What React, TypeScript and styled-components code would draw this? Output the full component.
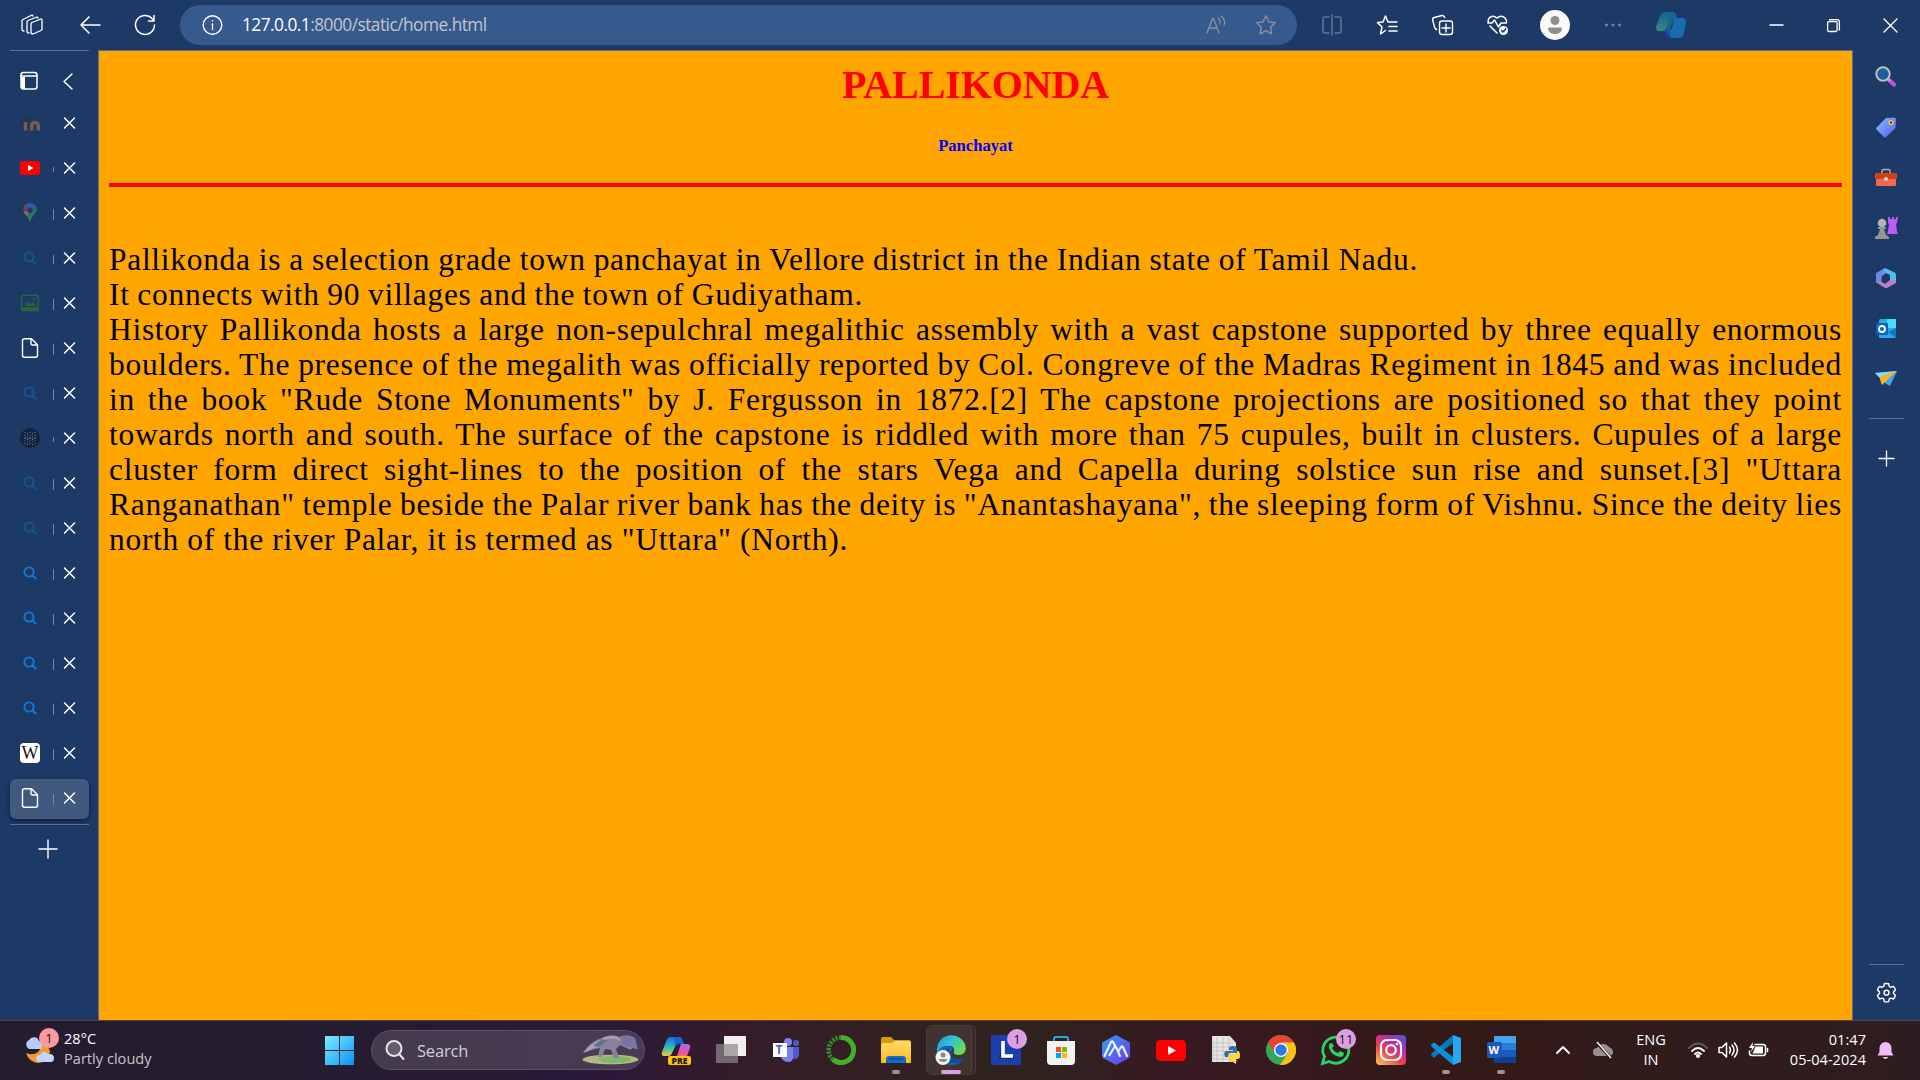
import React from "react";
import styled, { createGlobalStyle } from "styled-components";

const Global = createGlobalStyle`
  * { box-sizing: border-box; }
  html, body { margin: 0; padding: 0; background: #1d3a67; overflow: hidden; }
  svg { display: block; flex: none; overflow: visible; }
`;

const UI = `"Open Sans", "Noto Sans", sans-serif`;

const Screen = styled.div`
  width: 1920px;
  height: 1080px;
  display: grid;
  grid-template-rows: 50px 970px 60px;
  background: #1d3a67;
  color: #fff;
  font-family: ${UI};
  overflow: hidden;
`;
const Toolbar = styled.header`
  display: flex;
  align-items: center;
  height: 50px;
`;
const Slot = styled.div<{ $w: number }>`
  width: ${(p) => p.$w}px;
  flex: none;
  display: flex;
  align-items: center;
  justify-content: center;
`;
const Address = styled.div`
  width: 1117px;
  height: 40px;
  flex: none;
  display: flex;
  align-items: center;
  padding-left: 22px;
  border-radius: 20px;
  background: #365a8e;
`;
const Url = styled.div`
  flex: 1;
  margin-left: 8px;
  font-size: 17.3px;
  line-height: 24px;
  letter-spacing: -0.52px;
  color: #c3c5c9;
  white-space: nowrap;
  b { color: #fff; font-weight: 400; }
`;
const Middle = styled.div`
  display: grid;
  grid-template-columns: 98px 1755px 67px;
  height: 970px;
`;
const TabRail = styled.aside`
  display: flex;
  flex-direction: column;
  padding: 0 9px 0 10px;
`;
const RailLine = styled.div<{ $w?: number }>`
  width: ${(p) => p.$w ?? 79}px;
  height: 1px;
  flex: none;
  background: #5b708f;
`;
const RailHead = styled.div`
  height: 50px;
  margin-bottom: 3px;
  display: flex;
  align-items: center;
  padding: 10px 0 0 9px;
  gap: 25px;
`;
const Tab = styled.div<{ $active?: boolean }>`
  width: 79px;
  height: 40px;
  margin-bottom: 5px;
  flex: none;
  display: flex;
  align-items: center;
  padding: 0 0 2px 10px;
  border-radius: 6px;
  background: ${(p) => (p.$active ? "#41597f" : "transparent")};
  box-shadow: ${(p) => (p.$active ? "0 2px 5px rgba(5,15,40,.7)" : "none")};
`;
const TabTick = styled.div<{ $h: number }>`
  width: 1px;
  height: ${(p) => p.$h}px;
  margin: 3px 10px 0 13px;
  background: #7487a3;
`;
const Wiki = styled.div`
  width: 20px;
  height: 20px;
  border-radius: 4px;
  background: #fff;
  color: #111;
  font: 18px/20px "Liberation Serif", serif;
  display: flex;
  justify-content: center;
`;
const NewTab = styled.div`
  display: flex;
  justify-content: center;
  padding: 15px 3px 0 0;
`;
const Page = styled.main`
  border: 1px solid #566f8f;
  border-bottom: 0;
  background: #ffa500;
  padding: 0 10px;
  font-family: "Liberation Serif", "Times New Roman", serif;
  color: #000;
`;
const Title = styled.h1`
  margin: 0;
  padding-top: 11px;
  font-size: 40px;
  line-height: 46px;
  letter-spacing: -0.1px;
  text-align: center;
  color: red;
`;
const Subtitle = styled.h5`
  margin: 28px 0 0;
  font-size: 16.6px;
  line-height: 19px;
  text-align: center;
  color: blue;
`;
const Rule = styled.hr`
  margin: 28px 0 55px;
  height: 4px;
  border: 0;
  background: red;
`;
const Line = styled.div<{ $w?: number }>`
  width: ${(p) => p.$w ?? 1733}px;
  height: 35px;
  font-size: 31.5px;
  line-height: 35px;
  letter-spacing: 0.7px;
  word-spacing: -2px;
  white-space: nowrap;
  text-align: justify;
  text-align-last: justify;
`;
const SideBar = styled.aside`
  display: flex;
  flex-direction: column;
  align-items: center;
  padding: 2px 1px 0 0;
`;
const SideItem = styled.div<{ $h?: number }>`
  height: ${(p) => p.$h ?? 50.3}px;
  flex: none;
  display: flex;
  align-items: center;
`;
const Spacer = styled.div`
  flex: 1;
`;
const Taskbar = styled.footer`
  height: 60px;
  display: flex;
  align-items: center;
  padding-bottom: 1px;
  border-top: 1px solid #514448;
  background: linear-gradient(90deg, #241d2f 0, #241d30 280px, #2b1938 600px, #351c2a 740px, #30221f 960px, #30221f 1040px, #371a22 1180px, #331918 1460px, #311b1b 1640px, #2e1d20 1920px);
`;
const Weather = styled.div`
  width: 312px;
  display: flex;
  padding-left: 23px;
`;
const WeatherIcon = styled.div`
  position: relative;
  width: 41px;
  height: 42px;
`;
const Badge = styled.div<{ $bg: string; $x: number; $y: number }>`
  position: absolute;
  left: ${(p) => p.$x}px;
  top: ${(p) => p.$y}px;
  width: 20px;
  height: 20px;
  border-radius: 50%;
  background: ${(p) => p.$bg};
  color: #1c1620;
  font-size: 13px;
  line-height: 20px;
  text-align: center;
`;
const Stack = styled.div<{ $align?: string }>`
  font-size: 14.5px;
  line-height: 20px;
  letter-spacing: 0.05px;
  text-align: ${(p) => p.$align ?? "left"};
  white-space: nowrap;
  span { color: #c9c6cb; }
`;
const SearchPill = styled.div`
  width: 274px;
  height: 40px;
  margin: 0 3px 0 5px;
  flex: none;
  display: flex;
  align-items: center;
  padding: 0 5px 0 13px;
  border: 1px solid #5f5068;
  border-radius: 20px;
  background: linear-gradient(90deg, #443b4c, #4a3a55);
`;
const SearchText = styled.div`
  flex: 1;
  margin-left: 12px;
  font-size: 16.5px;
  color: #d3ced6;
  letter-spacing: -0.2px;
`;
const AppButton = styled.div`
  position: relative;
  width: 55px;
  height: 50px;
  flex: none;
  display: flex;
  align-items: center;
  justify-content: center;
`;
const ActivePlate = styled.div`
  position: absolute;
  left: 3px;
  top: 0;
  width: 50px;
  height: 50px;
  border-radius: 6px;
  border: 1px solid #4a3d3a;
  background: #382b29;
  &::after {
    content: "";
    display: block;
    width: 44px;
    height: 48px;
    border-radius: 6px;
    border-right: 1px solid #52443f;
    background: #403331;
  }
`;
const Above = styled.div`
  position: relative;
`;
const Running = styled.div<{ $on?: boolean }>`
  position: absolute;
  left: 50%;
  bottom: 1px;
  width: ${(p) => (p.$on ? 20 : 8)}px;
  height: 4px;
  transform: translateX(-50%);
  border-radius: 2px;
  background: ${(p) => (p.$on ? "#dc9fe2" : "#9d9492")};
`;
const Pre = styled.div`
  position: absolute;
  left: 20px;
  top: 31px;
  width: 23px;
  height: 9px;
  border-radius: 2px;
  background: #ffc20e;
  color: #201a10;
  font-size: 8.5px;
  font-weight: 800;
  line-height: 9px;
  text-align: center;
`;
const TileLetter = styled.div<{ $x: number; $y: number; $s: number; $c?: string }>`
  position: absolute;
  left: ${(p) => p.$x}px;
  top: ${(p) => p.$y}px;
  font-size: ${(p) => p.$s}px;
  line-height: 1;
  font-weight: 700;
  color: ${(p) => p.$c ?? "#fff"};
`;
const Tray = styled.div`
  display: flex;
  align-items: center;
  margin-left: 15px;
`;
const Clock = styled.div`
  width: 89px;
  flex: none;
`;

type G = { w: number; h?: number; vb?: string; c?: string; sw?: number; children: React.ReactNode };
const Glyph = ({ w, h = w, vb, c = "#fff", sw = 1.3, children }: G) => (
  <svg width={w} height={h} viewBox={vb ?? `0 0 ${w} ${h}`} fill="none" stroke={c} strokeWidth={sw} strokeLinecap="round" strokeLinejoin="round">
    {children}
  </svg>
);
const Art = ({ w = 30, h = w, children }: { w?: number; h?: number; children: React.ReactNode }) => (
  <svg width={w} height={h} viewBox={`0 0 ${w} ${h}`}>{children}</svg>
);

const Close = () => <Glyph w={10} sw={1.5}><path d="M.5 0l10 10M10.500 0l-10 10" /></Glyph>;
const Lens = ({ dim }: { dim?: boolean }) => (
  <Glyph w={20} c={dim ? "#155792" : "#127ad5"} sw={1.9}><circle cx="9" cy="9" r="4.6" /><path d="m12.5 12.5 3.2 3.2" /></Glyph>
);
const FileIcon = () => (
  <Glyph w={20} sw={1.4}><path d="M4.5.7h7l6 6v10.6a2 2 0 0 1-2 2h-11a2 2 0 0 1-2-2V2.700a2 2 0 0 1 2-2ZM11 .7v5a1.300 1.300 0 0 0 1.300 1.300h5" /></Glyph>
);
const YouTube = ({ w, h }: { w: number; h: number }) => (
  <svg width={w} height={h} viewBox="0 0 30 21"><rect width="30" height="21" rx="4.500" fill="#f00" /><path d="M12 6v9l8-4.500z" fill="#fff" /></svg>
);
const Moodle = () => (
  <Art w={20}><g fill="none" stroke="#7d5c4e" strokeWidth="3.400"><path d="M5.500 17.500V9M11.700 17.500v-5c0-4 6.600-4 6.600 0v5" /></g><path d="M1 8 8 3.500l4 2.500-3 3-5-.5L1.500 15" fill="#2b3342" opacity=".8" /></Art>
);
const MapPin = () => (
  <Art w={20}><path d="M3 6a7 7 0 0 1 5-5.700l2 4.700-4 4z" fill="#6f4058" /><path d="M6 1.500a7 7 0 0 1 10 2L12 8 8 6z" fill="#2a5eae" /><path d="M16 3.500c2 4-1 7-3 9.500-1.500 2-2 4-3 6.500-1-2.500-1.500-4-3-6l5-5z" fill="#2b7762" /><path d="M3.300 8.500 6 8l4 2-3 3.500C5.500 11.600 4 10.500 3.300 8.500z" fill="#7c713f" /><circle cx="10" cy="7" r="2.600" fill="#1d3a67" /></Art>
);
const Picture = () => (
  <Art w={20}><rect x="1.700" y="2.200" width="16.600" height="15.600" rx="1" fill="none" stroke="#2c613f" strokeWidth="1.500" /><path d="M2 14h16v4H2z" fill="#2c613f" /><path d="m4 13 3.500-4 2.500 2 2.500-2 3.500 4z" fill="#2c613f" /><circle cx="14" cy="6.500" r="1.200" fill="#2c613f" /></Art>
);
const DotGlobe = () => (
  <Art w={20}><circle cx="10" cy="10" r="10" fill="#12233d" />
    {[4.5, 7.2, 10, 12.8, 15.5].map((y, j) => [5, 7.5, 10, 12.5, 15].map((x, i) => <circle key={x} cx={x} cy={y + (i % 2 ? 1 : 0)} r={j === 2 ? 0.9 : 0.65} fill="#5c6f8e" />))}
  </Art>
);

type T = { icon: React.ReactNode; tick?: number };
const tabs: T[] = [
  { icon: <Moodle />, tick: 0 },
  { icon: <YouTube w={20} h={14} />, tick: 5 },
  { icon: <MapPin />, tick: 11 },
  { icon: <Lens dim />, tick: 9 },
  { icon: <Picture />, tick: 11 },
  { icon: <FileIcon />, tick: 11 },
  { icon: <Lens dim />, tick: 11 },
  { icon: <DotGlobe />, tick: 5 },
  { icon: <Lens dim /> }, { icon: <Lens dim /> },
  { icon: <Lens /> }, { icon: <Lens /> }, { icon: <Lens /> }, { icon: <Lens /> },
  { icon: <Wiki>W</Wiki> },
  { icon: <FileIcon /> },
];

const story: { t: string; w?: number }[] = [
  { t: "Pallikonda is a selection grade town panchayat in Vellore district in the Indian state of Tamil Nadu.", w: 1309 },
  { t: "It connects with 90 villages and the town of Gudiyatham.", w: 754 },
  { t: "History Pallikonda hosts a large non-sepulchral megalithic assembly with a vast capstone supported by three equally enormous" },
  { t: "boulders. The presence of the megalith was officially reported by Col. Congreve of the Madras Regiment in 1845 and was included" },
  { t: 'in the book "Rude Stone Monuments" by J. Fergusson in 1872.[2] The capstone projections are positioned so that they point' },
  { t: "towards north and south. The surface of the capstone is riddled with more than 75 cupules, built in clusters. Cupules of a large" },
  { t: 'cluster form direct sight-lines to the position of the stars Vega and Capella during solstice sun rise and sunset.[3] "Uttara' },
  { t: 'Ranganathan" temple beside the Palar river bank has the deity is "Anantashayana", the sleeping form of Vishnu. Since the deity lies' },
  { t: 'north of the river Palar, it is termed as "Uttara" (North).', w: 739 },
];

const HiddenDefs = styled.svg`
  position: absolute;
`;
const Defs = () => (
  <HiddenDefs width="0" height="0">
    <defs>
      <linearGradient id="win" x1="0" y1="0" x2="1" y2="1"><stop stopColor="#7aeeff" /><stop offset="1" stopColor="#0a93f5" /></linearGradient>
      <linearGradient id="copA" x1="0" y1="0" x2="0" y2="1"><stop stopColor="#1a6fe0" /><stop offset=".5" stopColor="#24b8c0" /><stop offset="1" stopColor="#e8d13a" /></linearGradient>
      <linearGradient id="copB" x1="0" y1="0" x2="0" y2="1"><stop stopColor="#a86bf0" /><stop offset=".6" stopColor="#ed4fa0" /><stop offset="1" stopColor="#f58a4a" /></linearGradient>
      <linearGradient id="dimA" x1="0" y1="0" x2="0" y2="1"><stop stopColor="#13609b" /><stop offset="1" stopColor="#3a8a7b" /></linearGradient>
      <linearGradient id="insta" x1=".1" y1="1" x2=".8" y2="0"><stop stopColor="#fdc04f" /><stop offset=".4" stopColor="#f0404f" /><stop offset=".7" stopColor="#c32aa3" /><stop offset="1" stopColor="#5b4fd5" /></linearGradient>
      <linearGradient id="edge" x1="0" y1="0" x2="1" y2=".5"><stop stopColor="#1c90df" /><stop offset=".5" stopColor="#35bfdc" /><stop offset="1" stopColor="#65dd58" /></linearGradient>
      <linearGradient id="fold" x1="0" y1="0" x2="0" y2="1"><stop stopColor="#ffdb6e" /><stop offset="1" stopColor="#fbb91c" /></linearGradient>
      <linearGradient id="tag" x1="0" y1="0" x2="1" y2="1"><stop stopColor="#91b9ff" /><stop offset="1" stopColor="#4a61ee" /></linearGradient>
      <linearGradient id="hex" x1="0" y1="0" x2="1" y2="1"><stop stopColor="#33a2ee" /><stop offset="1" stopColor="#6a38e8" /></linearGradient>
    </defs>
  </HiddenDefs>
);

const side: React.ReactNode[] = [
  <Art w={22}><path d="m14.500 14.500 4.500 4" stroke="#c94cf0" strokeWidth="4.200" strokeLinecap="round" /><path d="m12.500 12.500 2.500 2.500" stroke="#aaa7a5" strokeWidth="3" /><circle cx="8" cy="8" r="6.700" fill="#17629c" stroke="#c1bfbd" strokeWidth="2" /></Art>,
  <Art w={22}><path d="M11 2 19 1.500q2 0 2 2L20.500 12 11 21q-1 1-2 0l-7.500-7.500q-1-1 0-2z" fill="url(#tag)" /><circle cx="16" cy="6.500" r="1.900" fill="#384059" stroke="#ffd21b" strokeWidth="1.300" /></Art>,
  <Art w={24} h={22}><path d="M8 6V4q0-1.500 1.500-1.500h5Q16 2.500 16 4v2" fill="none" stroke="#a5afb9" strokeWidth="1.500" /><rect x="2" y="9" width="20" height="10" rx="1.500" fill="#f0694b" /><rect x="1" y="6" width="22" height="6" rx="1" fill="#d04015" /><circle cx="12" cy="12" r="2" fill="#d7dce0" /></Art>,
  <Art w={24}><path d="M14 1h2v2h2V1h2v2h2V1h2l-1 6-1 1 1 8 1 2H13l1-3 1-7-1-1z" fill="#bd5cf5" /><circle cx="8" cy="7" r="4.300" fill="#b5b3b1" /><path d="M4 11h8v2h-2l2 6 3 2v2H1v-2l3-2 2-6H4z" fill="#989694" /></Art>,
  <Art w={22}><path d="M10 1 2 5.500Q1 6 1 7.500v8L6 18l1-9 7-5z" fill="#7188e2" /><path d="m10 1 9.500 4.500Q21 6 21 8v6l-6-1V8L9 5z" fill="#51bdf1" /><path d="m1 15 9 6q1 .7 2 0l9-5v-3l-6 0-5 4-3-2z" fill="#bd7dcf" /></Art>,
  <Art w={22} h={20}><rect x="4" width="17" height="19" rx="1.500" fill="#27a8e9" /><path d="M12 0h9v9h-9z" fill="#50d9ff" /><path d="m13 13 8-4v10z" fill="#1277be" /><rect x="1" y="4" width="12" height="12" rx="1" fill="#0b62bb" /><circle cx="7" cy="10" r="3" fill="none" stroke="#fff" strokeWidth="1.800" /></Art>,
  <Art w={22} h={18}><path d="m0 3 22-2-7 15-5-3z" fill="#3aa6f7" /><path d="m4 6 17-5-13 9-1 5z" fill="#ffc126" /><path d="M0 3 22 1 4 7z" fill="#8bd6ff" /><path d="m7 15-2-8 17-6z" fill="#f5b31d" /></Art>,
];

const Anteater = () => (
  <Art w={57} h={30}>
    <ellipse cx="28.500" cy="24.500" rx="28" ry="4.800" fill="#b0ba80" /><ellipse cx="33" cy="24.500" rx="16" ry="3.500" fill="#84b868" />
    <path d="M1 18Q8 7 17 4q10-5 20-2 9-4 16 1l2 11-5-1-1 2-7-3-4-2-4 4 3 9h-5l-3-8-6-1-3 8h-4l2-9-5 1Q10 15 1 18z" fill="#8980a0" />
    <path d="M1 18Q9 8 18 5l5 2-6 5Q10 13 1 18z" fill="#a9a1b5" /><path d="m11 11 9-7 6 1-9 7z" fill="#5d7287" /><path d="M19 4q7-5 16-3l5 5q-10-4-17-1z" fill="#aa9ba6" /><path d="M38 3q8-4 15 0l3 11-7-2-8-2z" fill="#7774a0" />
  </Art>
);

const Word = () => (
  <Above><Art><path d="M8 1h22v7H8z" fill="#41a5ee" /><path d="M8 8h22v7H8z" fill="#2b7cd3" /><path d="M8 15h22v7H8z" fill="#185abd" /><path d="M8 22h22v6H8z" fill="#103f91" /><rect x="1" y="7" width="15" height="16" rx="1.500" fill="#1d57bb" /></Art><TileLetter $x={3} $y={9} $s={11}>W</TileLetter></Above>
);

const apps: React.ReactNode[] = [
  <AppButton key="copilot"><Art><path d="M6 4q1-2 4-2h9l-4 8-4 8q-1 3-4 3H3q-3 0-2-4z" fill="url(#copA)" /><path d="M13 2h6q2 0 3 4l1 3h-5q-2 0-3 2l-1 1z" fill="#1663cf" /><path d="M20 9h6q4 0 3 4l-3 8q-1 3-4 3h-8q2-2 3-6z" fill="url(#copB)" /></Art><Pre>PRE</Pre></AppButton>,
  <AppButton key="task"><Art><rect x="8" y="1" width="22" height="20" fill="#f1f0f1" /><rect y="9" width="22" height="19" fill="#777475" opacity=".9" /><path d="M8 9h14v12H8z" fill="#a9a7a8" /></Art></AppButton>,
  <AppButton key="teams"><Above><Art w={28}><circle cx="16" cy="6" r="4" fill="#7b83eb" /><circle cx="24" cy="7" r="3" fill="#5059c9" /><path d="M18 11h9v7q0 5-5 5h-4z" fill="#5059c9" /><path d="M9 11h12v10q0 5-5 5t-7-5z" fill="#7b83eb" /><path d="M1 7h14v14H1z" fill="#fff" /></Art><TileLetter $x={4} $y={8} $s={12} $c="#5059c9">T</TileLetter></Above></AppButton>,
  <AppButton key="conda"><Art><path d="M15 2.500a12.500 12.500 0 1 1-8 22" fill="none" stroke="#43b02a" strokeWidth="5" /><path d="M7 24.500A12.500 12.500 0 0 1 15 2.500" fill="none" stroke="#348e28" strokeWidth="4.500" strokeDasharray="2.300 1.200" /></Art></AppButton>,
  <AppButton key="folder"><Art><path d="M0 4q0-2 2-2h8l3 3h15q2 0 2 2v4H0z" fill="#dc9a08" /><path d="M0 10q0-2 2-2h9l3-2h14q2 0 2 2v20H0z" fill="url(#fold)" /><path d="M5 28v-4q0-3 3-3h14q3 0 3 3v4z" fill="#0c6fc4" /><path d="M8 24h14" stroke="#064a91" strokeWidth="1.500" /></Art><Running /></AppButton>,
  <AppButton key="edge"><ActivePlate /><Above><Art><path d="M1 13A14.500 14.500 0 0 1 29.800 13q0 7-7 7-6 0-5-4 1-4-3-5Q6 9 1 18z" fill="url(#edge)" /><path d="M1 18q4-8 12-7 4 1 3 4-4 7 4 9 4 1 8-1-5 8-14 7Q1 29 1 18z" fill="#0d65b9" /><path d="M12 12q-6 8 3 15 6 3 12-3-12 3-12-6z" fill="#0a4c9e" /><circle cx="7" cy="22.500" r="7.500" fill="#f5f3f2" /><circle cx="7" cy="20" r="2.500" fill="#8b8988" /><path d="M3 24h8q0 3-4 3t-4-3z" fill="#8b8988" /></Art></Above><Running $on /></AppButton>,
  <AppButton key="l"><Art><path d="M0 0h30v30H0z" fill="#1c3fae" /><path d="m8 24 3-18v15h12v3z" fill="#133158" /><path d="M12 6v15h10" fill="none" stroke="#fff" strokeWidth="3.600" /></Art><Badge $bg="#dc9fe2" $x={29} $y={4}>1</Badge></AppButton>,
  <AppButton key="store"><Art><path d="M8 7V4q0-2 2-2h10q2 0 2 2v3" fill="none" stroke="#21a9e8" strokeWidth="2" /><path d="M1 6h28v20q0 4-4 4H5q-4 0-4-4z" fill="#f3f2f2" /><path d="M10 12h5v5h-5z" fill="#f25022" /><path d="M16 12h5v5h-5z" fill="#7fba00" /><path d="M10 18h5v5h-5z" fill="#00a4ef" /><path d="M16 18h5v5h-5z" fill="#ffb900" /></Art></AppButton>,
  <AppButton key="hex"><Art><path d="m15 0 13 7q1 1 1 2v12q0 1-1 2l-13 7-13-7q-1-1-1-2V9q0-1 1-2z" fill="url(#hex)" /><path d="m3.500 21 6.500-14q1-1 2 0l4 7 3 7M8.500 20l5-8M17.500 16l2.500-4q1-1 2 0l4 9" fill="none" stroke="#eaf0ff" strokeWidth="2.200" strokeLinecap="round" strokeLinejoin="round" /></Art></AppButton>,
  <AppButton key="yt"><YouTube w={30} h={21} /></AppButton>,
  <AppButton key="py"><Art><path d="M1 1h18l6 7v21l-3-2H1z" fill="#e7e6e3" /><path d="M2 3v24M2 8h21M2 12h21M2 16h21M2 20h21M2 24h21M6 2v25M12 2v25M18 2v25" stroke="#bab8b6" strokeWidth=".7" /><path d="M18 13q0-2 4-2t4 2v5h-7q-2 0-2 4h-3q-2-5 1-6h7v-1h-4z" fill="#36709f" /><path d="M26 16h1q2 0 2 5 0 3-2 3h-5v1h4q0 2-4 2t-4-2v-4q0-2 2-2h4q2 0 2-3z" fill="#ffd43b" /></Art></AppButton>,
  <AppButton key="chrome"><Art><circle cx="15" cy="15" r="15" fill="#34a853" /><path d="M2 7.500A15 15 0 0 1 28 7.500H15L9 18z" fill="#ea4335" /><path d="M28 7.500A15 15 0 0 1 14 30l8-12-7-10.500z" fill="#fbc116" /><circle cx="15" cy="15" r="7" fill="#fff" /><circle cx="15" cy="15" r="5.700" fill="#2f76e8" /></Art></AppButton>,
  <AppButton key="wa"><Art><path d="m1.500 28.500 2-7a13 13 0 1 1 5 5z" fill="none" stroke="#25d366" strokeWidth="2.800" /><path d="M10 8q-3 1-2 5 3 8 11 9 4 0 4-4l-4-2-2 2q-4-1-6-5l2-2-2-3z" fill="#25d366" /></Art><Badge $bg="#dc9fe2" $x={28} $y={4}>11</Badge></AppButton>,
  <AppButton key="ig"><Art><rect width="30" height="30" rx="4" fill="url(#insta)" /><rect x="5" y="5" width="20" height="20" rx="6" fill="none" stroke="#fff" strokeWidth="2.200" /><circle cx="15" cy="15" r="4.800" fill="none" stroke="#fff" strokeWidth="2.200" /><circle cx="21" cy="9" r="1.300" fill="#fff" /></Art></AppButton>,
  <AppButton key="code"><Art><path d="m22 0 8 3v24l-8 3z" fill="#25a7f2" /><path d="M22 0v8L4 22q-1 1-2 0l-2-2q0-1 1-2z" fill="#0879bf" /><path d="M22 30v-8L4 8Q3 7 2 8l-2 2q0 1 1 2z" fill="#108fd8" /></Art><Running /></AppButton>,
  <AppButton key="word"><Word /><Running /></AppButton>,
];

export default function App() {
  return (
    <Screen>
      <Global />
      <Defs />
      <Toolbar>
        <Slot $w={64}><Glyph w={22} sw={1.3}><path d="M1 15V7q0-1 1-1.500L11 1M1 15q0 2 2 2M6 17V8q0-1 1-1.500L16 3M6 17q0 2 2 2M10 10q0-1 1-1.500L20 5q1 0 1 1v9q0 1-1 1.500L12 20q-2 0-2-2zM11 1l1 1M16 3l1 1" /></Glyph></Slot>
        <Slot $w={52}><Glyph w={20} h={18} sw={1.6}><path d="M20 9H1M9 1 1 9l8 8" /></Glyph></Slot>
        <Slot $w={58}><Glyph w={20} sw={1.5}><path d="M19.500 10a9.500 9.500 0 1 1-2.500-6.500L19 6M19 .5V6h-5.500" /></Glyph></Slot>
        <Slot $w={6} />
        <Address>
          <Glyph w={20} sw={1.4}><circle cx="10.500" cy="10" r="9.300" /><path d="M10.500 9v5.500M10.500 5.700v.2" /></Glyph>
          <Slot $w={12} />
          <Url><b>127.0.0.1</b>:8000/static/home.html</Url>
          <Slot $w={50}><Glyph w={20} c="#8d9099"><path d="M1 18 6.500 3.500h1L13 18M3 13h8M12 3q3 2 2 6M15 1q5 4 3 9" /></Glyph></Slot>
          <Slot $w={50}><Glyph w={20} c="#8d9099" sw={1.4}><path d="m10 .8 2.800 6 6.500.9-4.700 4.600 1.100 6.500-5.700-3.100-5.800 3.100 1.100-6.500L.7 7.700l6.500-.9z" /></Glyph></Slot>
          <Slot $w={6} />
        </Address>
        <Slot $w={7} />
        <Slot $w={55}><Glyph w={20} c="#5f7595" sw={1.5}><path d="M7 2H3Q1 2 1 4v12q0 2 2 2h4M13 2h4q2 0 2 2v12q0 2-2 2h-4M10 0v20" /></Glyph></Slot>
        <Slot $w={56}><Glyph w={21} h={20} sw={1.5}><path d="m11 7-2.500-6L6 7l-5.500.6L5 12l-1.500 7L8.500 15.500M11 7h9M12 11.500h8M12 16h8" /></Glyph></Slot>
        <Slot $w={55}><Glyph w={21} h={20} sw={1.4}><rect x="7.500" y="6" width="13" height="13.500" rx="2.500" /><path d="M4.500 14.500Q3 14 2.500 12L.7 5q-.5-2 1.500-2.500L10 .5q2-.3 2.800 2M14 9v8M10 13h8" /></Glyph></Slot>
        <Slot $w={55}><Glyph w={21} h={20} sw={1.5}><path d="M.8 8H5l2.500-3 4 7L14 8h5.500M1.500 8C0 3 5-1 10 3c5-4 10 0 9.500 5M3 11l7 7" /><circle cx="16.500" cy="15.500" r="4.500" fill="#fff" stroke="none" /><path d="m14.500 15.500 1.400 1.400 2.800-3" stroke="#1d3a67" /></Glyph></Slot>
        <Slot $w={59}><Art><circle cx="15" cy="15" r="15" fill="#fafafa" /><circle cx="15" cy="10.500" r="4.500" fill="#8f8f8f" /><path d="M9 17.500h12q1 0 1 1.500-1 5-7 5t-7-5q0-1.500 1-1.500z" fill="#8f8f8f" /></Art></Slot>
        <Slot $w={58}><Glyph w={16} h={4}><g fill="#7083a1" stroke="none"><circle cx="1.500" cy="2" r="1.500" /><circle cx="8" cy="2" r="1.500" /><circle cx="14.500" cy="2" r="1.500" /></g></Glyph></Slot>
        <Slot $w={58}><Art w={30} h={26}><path d="M11 0h6q2 0 3 3l1 4q-3 1-5 5l-4 8-3-4z" fill="#13698f" /><path d="M19 6h7q4 0 4 4l-2 11q-1 5-5 5h-7q-3 0-4-4l-1-4h2q3 0 4-5z" fill="#176db1" /><path d="M8 18h5l2 7q-4 0-5-3z" fill="#1c48b5" /><path d="M4 4q1-4 5-4h7q-2 1-3 5l-3 11q-1 3-4 3H3q-3 0-3-4z" fill="url(#dimA)" /></Art></Slot>
        <Slot $w={47} />
        <Slot $w={58}><Glyph w={13} h={2} sw={1.5}><path d="M0 1h13" /></Glyph></Slot>
        <Slot $w={56}><Glyph w={13} sw={1.3}><path d="M2.500.6H10q2.400 0 2.400 2.400v8" /><rect x=".6" y="2.500" width="9.500" height="10" rx="1.500" /></Glyph></Slot>
        <Slot $w={59}><Glyph w={13} sw={1.3}><path d="m0 0 13 13M13 0 0 13" /></Glyph></Slot>
      </Toolbar>

      <Middle>
        <TabRail>
          <RailLine />
          <RailHead>
            <Glyph w={20} sw={1.5}><rect x="2" y="1.500" width="16" height="16.500" rx="2.500" /><path d="M2 5h16" /><path d="M2 6h4v12H3.500Q2 18 2 16z" fill="#fff" stroke="none" /></Glyph>
            <Glyph w={8} h={15} sw={1.5}><path d="M8 0 0 7.500 8 15" /></Glyph>
          </RailHead>
          {tabs.map((t, i) => (
            <Tab key={i} $active={i === tabs.length - 1}>
              {t.icon}
              <TabTick $h={t.tick ?? 11} />
              <Close />
            </Tab>
          ))}
          <RailLine />
          <NewTab><Glyph w={18} sw={1.4}><path d="M9 0v18M0 9h18" /></Glyph></NewTab>
        </TabRail>

        <Page>
          <Title>PALLIKONDA</Title>
          <Subtitle>Panchayat</Subtitle>
          <Rule />
          {story.map((l) => <Line key={l.t} $w={l.w}>{l.t}</Line>)}
        </Page>

        <SideBar>
          {side.map((s, i) => <SideItem key={i}>{s}</SideItem>)}
          <SideItem $h={14} />
          <RailLine $w={35} />
          <SideItem $h={79}><Glyph w={15} sw={1.3}><path d="M7.500 0v15M0 7.500h15" /></Glyph></SideItem>
          <Spacer />
          <RailLine $w={35} />
          <SideItem $h={55}><Glyph w={21} vb="0 0 24 24" sw={1.6}><path d="M9.500 2q2.500-.7 5 0l.6 3 1.900 1 2.900-1q1.700 1.800 2.400 4.200L20 11.300v1.900l2.300 2q-.7 2.300-2.400 4.200l-2.900-1-1.900 1-.6 3q-2.500.7-5 0l-.6-3-1.900-1-2.900 1q-1.700-1.900-2.400-4.200l2.300-2v-1.900l-2.300-2.100Q2.400 6.800 4.100 5L7 6l1.900-1z" /><circle cx="12" cy="12.200" r="2.800" /></Glyph></SideItem>
        </SideBar>
      </Middle>

      <Taskbar>
        <Weather>
          <WeatherIcon>
            <Art w={34} h={40}><path d="M18 13q8 3 9 10-2 11-12 11Q6 33 3 24q7 3 12-1 4-4 3-10z" fill="#f49a25" /><path d="M6 20a5 5 0 0 1 0-9 5.500 5.500 0 0 1 10 1q4 1 3 8z" fill="#b3ccf5" /><path d="M17 33q-4 0-4-3.500t4-3.500q3-6 8-1 6-.5 6 4t-4 4z" fill="#c1d7fa" /></Art>
            <Badge $bg="#ff98a3" $x={16} $y={-1}>1</Badge>
          </WeatherIcon>
          <Stack>28°C<br /><span>Partly cloudy</span></Stack>
        </Weather>
        <Slot $w={54}><Art><path d="M1 1h14v14H1zM16 1h14v14H16zM1 16h14v14H1zM16 16h14v14H16z" fill="url(#win)" /></Art></Slot>
        <SearchPill>
          <Glyph w={20} c="#e8e4ea" sw={2}><circle cx="9" cy="8.500" r="7.500" fill="#665b6d" /><path d="m14 14 4.500 5" /></Glyph>
          <SearchText>Search</SearchText>
          <Anteater />
        </SearchPill>
        {apps}
        <Tray>
          <Slot $w={40}><Glyph w={14} h={8} sw={2}><path d="m1 7 6-6 6 6" /></Glyph></Slot>
          <Slot $w={40}><Art w={20} h={16}><path d="M4 14a4 4 0 0 1 0-8 7 7 0 0 1 12-1q4 2 4 5 0 4-4 4z" fill="#9b908f" /><path d="m3 0 15 16" stroke="#351b1a" strokeWidth="3" /><path d="m4 0 14 16" stroke="#fff" strokeWidth="1.300" /></Art></Slot>
          <Slot $w={56}><Stack $align="center">ENG<br />IN</Stack></Slot>
          <Slot $w={38}><Glyph w={20} h={16} sw={1.8}><path d="M1 6q9-9 18 0" stroke="#695756" /><path d="M4 9q6-6 12 0M7 12q3-3 6 0" /><circle cx="10" cy="14" r="1.200" fill="#fff" /></Glyph></Slot>
          <Slot $w={22}><Glyph w={20} h={16} sw={1.5}><path d="M1 5.500h3L8.500 1v14L4 10.500H1zM11.500 5q2 3 0 6M14 3q4 5 0 10M16.500 1q6 7 0 14" /></Glyph></Slot>
          <Slot $w={38}><Glyph w={20} h={16} sw={1.5}><path d="M7 2.500h8q2.500 0 2.500 2.500v6q0 2.500-2.500 2.500H4Q1.500 13.500 1.500 11V9M19.500 6.500v3" /><path d="M7.500 4.500H15v7H4.500z" fill="#fff" stroke="none" /><path d="M5 0 1 6h3l-1 4 4-6H4.500z" fill="#fff" stroke="none" /></Glyph></Slot>
          <Clock><Stack $align="right">01:47<br />05-04-2024</Stack></Clock>
          <Slot $w={38}><Art w={17} h={20}><path d="M2.500 8a6 6 0 0 1 12 0v4l2 3.500H.5l2-3.500zM5.500 17h6q-3 4-6 0z" fill="#eebbf3" /></Art></Slot>
        </Tray>
      </Taskbar>
    </Screen>
  );
}
